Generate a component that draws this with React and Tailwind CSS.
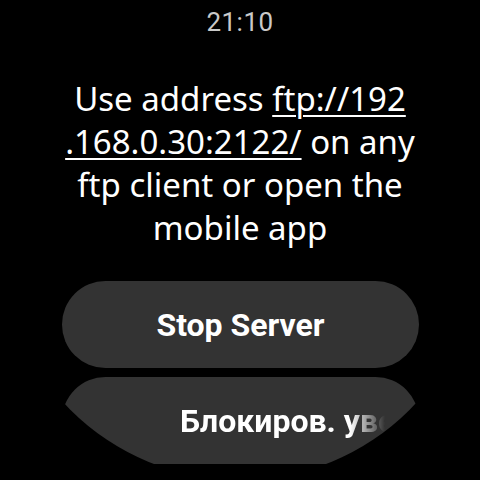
import React from 'react';

const App = () => {
    return (
        <div className="w-[480px] h-[480px] bg-black" style={{ fontFamily: 'Roboto, "Noto Sans", sans-serif' }}>
            <div className="w-[480px] h-[480px] rounded-full overflow-hidden bg-black flex flex-col items-center">
                {/* status time */}
                <div className="mt-[6px] h-[32px] flex items-center text-[26px] text-[#c9c9c9] leading-none tracking-[0.5px]">
                    21:10
                </div>

                {/* info text */}
                <p
                    className="mt-[39px] text-white text-[33px] leading-[43px] text-center whitespace-nowrap"
                    style={{ fontFamily: '"Noto Sans", Roboto, sans-serif' }}
                >
                    Use address{' '}
                    <span className="underline decoration-2 underline-offset-[4px]">
                        ftp://192
                        <br />
                        .168.0.30:2122/
                    </span>{' '}
                    on any
                    <br />
                    ftp client or open the
                    <br />
                    mobile app
                </p>

                {/* actions */}
                <div className="mt-[32px] flex flex-col gap-[9px] pl-px">
                    <button className="w-[357px] h-[87px] rounded-full bg-[#333333] text-white text-[32px] font-bold flex items-center justify-center">
                        Stop Server
                    </button>
                    <button className="w-[357px] h-[87px] rounded-full bg-[#333333] text-white text-[32px] font-bold flex items-center pl-[118px] overflow-hidden">
                        <span
                            className="block w-[210px] whitespace-nowrap overflow-hidden text-left"
                            style={{
                                maskImage: 'linear-gradient(to right, black 170px, transparent 205px)',
                                WebkitMaskImage: 'linear-gradient(to right, black 170px, transparent 205px)',
                            }}
                        >
                            Блокиров. уведомлений
                        </span>
                    </button>
                </div>
            </div>
        </div>
    );
};

export default App;
